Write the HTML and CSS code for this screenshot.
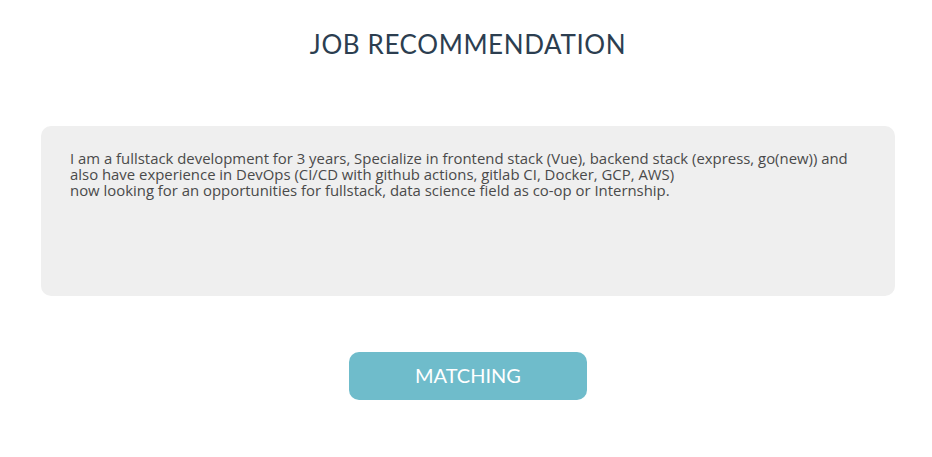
FILE: index.html
```html
<!DOCTYPE html>
<html>
<head>
<meta charset="utf-8">
<link rel="stylesheet" href="styles.css">
</head>
<body>
<main class="page">
  <h1 class="title">JOB RECOMMENDATION</h1>
  <textarea class="profile" wrap="off">I am a fullstack development for 3 years, Specialize in frontend stack (Vue), backend stack (express, go(new)) and
also have experience in DevOps (CI/CD with github actions, gitlab CI, Docker, GCP, AWS)
now looking for an opportunities for fullstack, data science field as co-op or Internship.</textarea>
  <button class="match">MATCHING</button>
</main>
</body>
</html>
```

FILE: styles.css
```css
html, body {
  margin: 0;
  padding: 0;
  background: #ffffff;
}

.page {
  display: flex;
  flex-direction: column;
  align-items: center;
  padding: 0 37px 0 41px;
  font-family: "Open Sans", "Noto Sans", sans-serif;
}

.title {
  margin: 27px 0 0;
  font-family: "Lato", sans-serif;
  font-weight: 400;
  font-size: 26px;
  line-height: 34px;
  color: #2c3e50;
  letter-spacing: 0.6px;
}

.profile {
  box-sizing: border-box;
  margin-top: 65px;
  width: 854px;
  height: 170px;
  border: none;
  border-radius: 10px;
  background: #efefef;
  padding: 24px 29px;
  font-family: "Open Sans", sans-serif;
  font-size: 14.9px;
  line-height: 16px;
  color: #4a4a4a;
  resize: none;
  overflow: hidden;
  white-space: pre;
  outline: none;
}

.match {
  margin-top: 56px;
  width: 238px;
  height: 48px;
  border: none;
  border-radius: 10px;
  background: #6fbccb;
  color: #ffffff;
  font-family: "Lato", sans-serif;
  font-size: 20px;
  line-height: 46px;
  padding: 0 0 2px;
}
```
